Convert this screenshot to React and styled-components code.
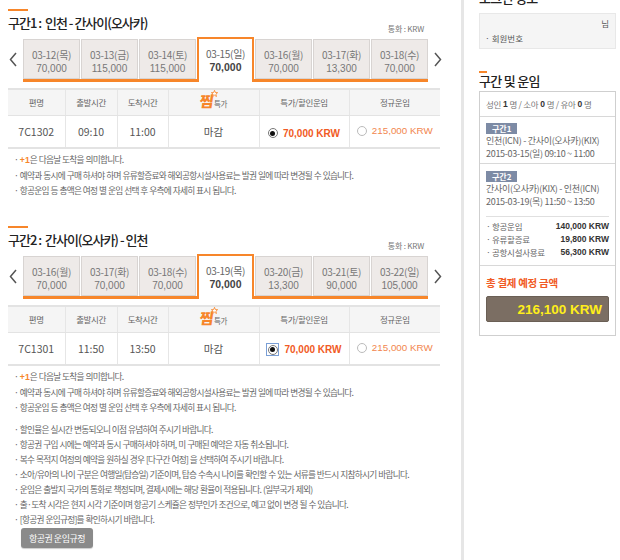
import React from "react";
import styled, { createGlobalStyle } from "styled-components";

const ORANGE = "#f7862a";
const RED = "#f15a24";

const Global = createGlobalStyle`
  html, body { margin: 0; padding: 0; background: #fff; }
  body { font-family: "Noto Sans CJK KR", "Liberation Sans", sans-serif; color: #444; font-size: 10px; }
  * { box-sizing: border-box; }
`;

const Page = styled.div`
  display: flex;
  width: 620px;
  height: 560px;
  overflow: hidden;
`;

const Main = styled.div`
  width: 461px;
  padding: 9px 21px 0 8px;
`;

const Divider = styled.div`
  width: 3px;
  background: #e6e6e6;
  flex: none;
`;

const Side = styled.div`
  width: 156px;
  padding: 0 4px 0 15px;
`;

const Section = styled.section`
  margin-bottom: ${(p) => p.$mb || 0}px;
`;

const Bar = styled.div`
  width: ${(p) => p.$w || 20}px;
  height: 2px;
  background: ${ORANGE};
`;

const Title = styled.h2`
  margin: 3px 0 0;
  font-size: 13px;
  font-weight: 500;
  color: #222;
  line-height: 18px;
  letter-spacing: -1px;
  white-space: pre;
`;

const Currency = styled.div`
  text-align: right;
  font-size: 8px;
  color: #777;
  line-height: 10px;
  margin: -8px 16px 0 0;
  letter-spacing: -0.2px;
`;

const TabRow = styled.div`
  display: flex;
  align-items: center;
  margin-top: 3px;
`;

const Arrow = styled.div`
  width: 15px;
  flex: none;
  display: flex;
  justify-content: ${(p) => (p.$right ? "flex-end" : "flex-start")};
  padding-left: ${(p) => (p.$right ? "0" : "1px")};
  padding-right: ${(p) => (p.$right ? "1px" : "0")};
  margin-top: -1px;
`;

const Tabs = styled.div`
  display: flex;
  gap: 1px;
  width: 405px;
  height: 45px;
  align-items: flex-end;
  box-shadow: inset 0 -3px 0 ${ORANGE};
`;

const Tab = styled.div`
  width: 57px;
  flex: none;
  text-align: center;
  font-size: 10px;
  line-height: 13px;
  letter-spacing: -0.3px;
  ${(p) =>
    p.$sel
      ? `
    height: 45px;
    background: #fff;
    border: 2px solid ${ORANGE};
    border-bottom: none;
    padding-top: 8px;
    color: #666;
  `
      : `
    height: 40px;
    margin-bottom: 3px;
    background: #eeeae8;
    border: 1px solid #d8d4d2;
    padding-top: 8px;
    color: #777;
  `}
`;

const TabPrice = styled.div`
  font-family: "Liberation Sans", sans-serif;
  font-size: ${(p) => (p.$sel ? "10.5px" : "10px")};
  font-weight: ${(p) => (p.$sel ? 700 : 400)};
  color: ${(p) => (p.$sel ? "#444" : "#777")};
  margin-top: 1px;
  letter-spacing: 0;
`;

const Table = styled.table`
  width: 432px;
  margin-top: 6px;
  border-collapse: collapse;
  table-layout: fixed;
  border-top: 2px solid #e3e3e3;
  border-bottom: 2px solid #e3e3e3;
`;

const Th = styled.th`
  height: 26px;
  background: #f5f5f5;
  font-weight: 400;
  font-size: 8.5px;
  color: #666;
  border-left: 1px solid #e6e6e6;
  border-bottom: 1px solid #e3e3e3;
  letter-spacing: -0.4px;
  padding: 0;
  &:first-child { border-left: none; }
`;

const Td = styled.td`
  height: 33px;
  text-align: center;
  font-size: 10.5px;
  color: #555;
  border-left: 1px solid #e6e6e6;
  padding: 0;
  &:first-child { border-left: none; }
`;

const Jjim = styled.span`
  display: inline-flex;
  align-items: flex-end;
  position: relative;
  margin-top: -3px;
`;

const JjimChar = styled.span`
  font-size: 15px;
  font-weight: 900;
  color: ${ORANGE};
  line-height: 15px;
  letter-spacing: -1px;
  transform: skewX(-8deg);
`;

const JjimSmall = styled.span`
  font-size: 7.5px;
  color: #666;
  margin-left: 1px;
  line-height: 9px;
`;

const Star = styled.svg`
  position: absolute;
  left: 11px;
  top: -3px;
`;

const FareCell = styled.span`
  display: inline-flex;
  align-items: center;
  gap: 5px;
  font-family: "Liberation Sans", sans-serif;
  font-size: ${(p) => (p.$bold ? "10px" : "9.8px")};
  font-weight: ${(p) => (p.$bold ? 700 : 400)};
  color: ${(p) => (p.$bold ? RED : "#f2864e")};
`;

const RadioWrap = styled.span`
  display: inline-flex;
  width: ${(p) => (p.$focus ? "13px" : "auto")};
  height: ${(p) => (p.$focus ? "13px" : "auto")};
  align-items: center;
  justify-content: center;
  border: ${(p) => (p.$focus ? "1px solid #7a9fd6" : "none")};
`;

const Radio = styled.span`
  width: 10px;
  height: 10px;
  border-radius: 50%;
  border: 1px solid ${(p) => (p.$on ? "#777" : "#bbb")};
  background: #fff;
  display: inline-flex;
  align-items: center;
  justify-content: center;
  &::after {
    content: "";
    display: ${(p) => (p.$on ? "block" : "none")};
    width: 5px;
    height: 5px;
    border-radius: 50%;
    background: #111;
  }
`;

const Notes = styled.ul`
  list-style: none;
  margin: ${(p) => p.$mt || 3}px 0 0;
  padding: 0 0 0 6px;
`;

const Note = styled.li`
  font-size: 8.7px;
  line-height: 15px;
  color: #666;
  letter-spacing: -0.75px;
  word-spacing: 0.5px;
  white-space: nowrap;
  &::before { content: "· "; }
`;

const Plus = styled.b`
  color: ${ORANGE};
  font-family: "Liberation Sans", sans-serif;
  letter-spacing: 0;
`;

const RuleButton = styled.button`
  display: block;
  margin: 1px 0 0 13px;
  height: 20px;
  padding: 0 8px;
  border: none;
  border-radius: 3px;
  background: #8a8a8a;
  color: #fff;
  font-family: "Noto Sans CJK KR", sans-serif;
  font-size: 9px;
  letter-spacing: -0.5px;
  box-shadow: 0 1px 1px rgba(0,0,0,0.2);
`;

/* side */
const SideTitle = styled.h3`
  margin: ${(p) => p.$mt || 0}px 0 0;
  font-size: 13px;
  font-weight: 500;
  color: #222;
  line-height: 16px;
  letter-spacing: -0.7px;
`;

const LoginBox = styled.div`
  margin-top: 7px;
  width: 137px;
  height: 36px;
  background: #f5f5f5;
  border: 1px solid #e8e8e8;
  padding: 2px 6px 0 5px;
  font-size: 8.5px;
  color: #555;
  line-height: 15px;
`;

const RightText = styled.div`
  text-align: right;
`;

const Spacer = styled.div`
  height: ${(p) => p.$h}px;
`;

const FareBox = styled.div`
  margin-top: 2px;
  width: 137px;
  border: 1px solid #cfcfcf;
`;

const Pax = styled.div`
  height: 25px;
  padding: 0 6px;
  display: flex;
  align-items: center;
  font-size: 8.5px;
  color: #777;
  border-bottom: 1px solid #d8d8d8;
  letter-spacing: -0.3px;
  b { color: #333; font-family: "Liberation Sans", sans-serif; margin: 0 2px; }
`;

const Seg = styled.div`
  padding: ${(p) => (p.$last ? "7px 6px 8px" : "6px 6px 3px")};
  border-bottom: ${(p) => (p.$last ? "none" : "1px solid #d8d8d8")};
`;

const Badge = styled.div`
  width: fit-content;
  height: 11px;
  padding: 0 6px;
  background: #7d8ba5;
  color: #fff;
  font-size: 8px;
  line-height: 11px;
  font-weight: 700;
`;

const SegLine = styled.div`
  font-size: 9px;
  color: #666;
  line-height: 13px;
  letter-spacing: -0.3px;
  white-space: nowrap;
`;

const Fees = styled.div`
  margin: 0 6px;
  padding: 3px 0 6px;
  border-top: 1px solid #e0e0e0;
`;

const FeeRow = styled.div`
  display: flex;
  justify-content: space-between;
  font-size: 8.5px;
  line-height: 13px;
  color: #666;
  letter-spacing: -0.3px;
  b { font-family: "Liberation Sans", sans-serif; color: #333; letter-spacing: 0; }
`;

const TotalArea = styled.div`
  border-top: 1px solid #d8d8d8;
  padding: 10px 6px 13px;
`;

const TotalLabel = styled.div`
  font-size: 10.5px;
  font-weight: 700;
  color: ${RED};
  line-height: 14px;
  letter-spacing: -0.3px;
`;

const TotalAmount = styled.div`
  margin-top: 6px;
  height: 26px;
  background: #7b6e63;
  border: 1px solid #6a5f55;
  border-radius: 2px;
  display: flex;
  align-items: center;
  justify-content: flex-end;
  padding-right: 6px;
  font-family: "Liberation Sans", sans-serif;
  font-weight: 700;
  font-size: 13.5px;
  color: #ffee1a;
`;

const Chevron = ({ right }) => (
  <svg width="8" height="15" viewBox="0 0 8 15">
    <path
      d={right ? "M1 1 L6.5 7.5 L1 14" : "M7 1 L1.5 7.5 L7 14"}
      fill="none"
      stroke="#555"
      strokeWidth="1.5"
    />
  </svg>
);

const segs = [
  {
    title: "구간1 :  인천 - 간사이(오사카)",
    tabs: [
      ["03-12(목)", "70,000"],
      ["03-13(금)", "115,000"],
      ["03-14(토)", "115,000"],
      ["03-15(일)", "70,000"],
      ["03-16(월)", "70,000"],
      ["03-17(화)", "13,300"],
      ["03-18(수)", "70,000"],
    ],
    flight: ["7C1302", "09:10", "11:00"],
    focus: false,
  },
  {
    title: "구간2 :  간사이(오사카) - 인천",
    tabs: [
      ["03-16(월)", "70,000"],
      ["03-17(화)", "70,000"],
      ["03-18(수)", "70,000"],
      ["03-19(목)", "70,000"],
      ["03-20(금)", "13,300"],
      ["03-21(토)", "90,000"],
      ["03-22(일)", "105,000"],
    ],
    flight: ["7C1301", "11:50", "13:50"],
    focus: true,
  },
];

const Segment = ({ s, mb }) => (
  <Section $mb={mb}>
    <Bar />
    <Title>{s.title}</Title>
    <Currency>통화 : KRW</Currency>
    <TabRow>
      <Arrow>
        <Chevron />
      </Arrow>
      <Tabs>
        {s.tabs.map(([d, p], i) => (
          <Tab key={i} $sel={i === 3}>
            <div>{d}</div>
            <TabPrice $sel={i === 3}>{p}</TabPrice>
          </Tab>
        ))}
      </Tabs>
      <Arrow $right>
        <Chevron right />
      </Arrow>
    </TabRow>
    <Table>
      <colgroup>
        <col style={{ width: 57 }} />
        <col style={{ width: 52 }} />
        <col style={{ width: 51 }} />
        <col style={{ width: 91 }} />
        <col style={{ width: 90 }} />
        <col style={{ width: 91 }} />
      </colgroup>
      <thead>
        <tr>
          <Th>편명</Th>
          <Th>출발시간</Th>
          <Th>도착시간</Th>
          <Th>
            <Jjim>
              <JjimChar>찜</JjimChar>
              <Star width="7" height="7" viewBox="0 0 10 10">
                <path
                  d="M5 0.5 L6.2 3.6 L9.5 3.8 L7 5.9 L7.8 9.3 L5 7.4 L2.2 9.3 L3 5.9 L0.5 3.8 L3.8 3.6 Z"
                  fill="#fff"
                  stroke={ORANGE}
                  strokeWidth="1.2"
                />
              </Star>
              <JjimSmall>특가</JjimSmall>
            </Jjim>
          </Th>
          <Th>특가/할인운임</Th>
          <Th>정규운임</Th>
        </tr>
      </thead>
      <tbody>
        <tr>
          <Td>{s.flight[0]}</Td>
          <Td>{s.flight[1]}</Td>
          <Td>{s.flight[2]}</Td>
          <Td>마감</Td>
          <Td>
            <FareCell $bold>
              <RadioWrap $focus={s.focus}>
                <Radio $on />
              </RadioWrap>
              70,000 KRW
            </FareCell>
          </Td>
          <Td>
            <FareCell>
              <Radio />
              215,000 KRW
            </FareCell>
          </Td>
        </tr>
      </tbody>
    </Table>
    <Notes>
      <Note>
        <Plus>+1</Plus>은 다음날 도착을 의미합니다.
      </Note>
      <Note>예약과 동시에 구매 하셔야 하며 유류할증료와 해외공항시설사용료는 발권 일에 따라 변경될 수 있습니다.</Note>
      <Note>항공운임 등 총액은 여정 별 운임 선택 후 우측에 자세히 표시 됩니다.</Note>
    </Notes>
  </Section>
);

const general = [
  "할인율은 실시간 변동되오니 이점 유념하여 주시기 바랍니다.",
  "항공권 구입 시에는 예약과 동시 구매하셔야 하며, 미 구매된 예약은 자동 취소됩니다.",
  "복수 목적지 여정의 예약을 원하실 경우 [다구간 여정] 을 선택하여 주시기 바랍니다.",
  "소아/유아의 나이 구분은 여행일(탑승일) 기준이며, 탑승 수속시 나이를 확인할 수 있는 서류를 반드시 지참하시기 바랍니다.",
  "운임은 출발지 국가의 통화로 책정되며, 결제시에는 해당 환율이 적용됩니다. (일부국가 제외)",
  "출·도착 시각은 현지 시각 기준이며 항공기 스케쥴은 정부인가 조건으로, 예고 없이 변경 될 수 있습니다.",
  "[항공권 운임규정]를 확인하시기 바랍니다.",
];

export default function App() {
  return (
    <>
      <Global />
      <Page>
        <Main>
          <Segment s={segs[0]} mb={28} />
          <Segment s={segs[1]} />
          <Notes $mt={7}>
            {general.map((t, i) => (
              <Note key={i}>{t}</Note>
            ))}
          </Notes>
          <RuleButton>항공권 운임규정</RuleButton>
        </Main>
        <Divider />
        <Side>
          <SideTitle $mt={-10}>로그인 정보</SideTitle>
          <LoginBox>
            <RightText>님</RightText>
            <div>· 회원번호</div>
          </LoginBox>
          <Spacer $h={22} />
          <Bar $w={8} />
          <SideTitle $mt={0}>구간 및 운임</SideTitle>
          <FareBox>
            <Pax>
              성인<b>1</b>명 / 소아<b>0</b>명 / 유아<b>0</b>명
            </Pax>
            <Seg>
              <Badge>구간1</Badge>
              <SegLine>인천(ICN) - 간사이(오사카)(KIX)</SegLine>
              <SegLine>2015-03-15(일) 09:10 ~ 11:00</SegLine>
            </Seg>
            <Seg $last>
              <Badge>구간2</Badge>
              <SegLine>간사이(오사카)(KIX) - 인천(ICN)</SegLine>
              <SegLine>2015-03-19(목) 11:50 ~ 13:50</SegLine>
            </Seg>
            <Fees>
              <FeeRow>
                <span>· 항공운임</span>
                <b>140,000 KRW</b>
              </FeeRow>
              <FeeRow>
                <span>· 유류할증료</span>
                <b>19,800 KRW</b>
              </FeeRow>
              <FeeRow>
                <span>· 공항시설사용료</span>
                <b>56,300 KRW</b>
              </FeeRow>
            </Fees>
            <TotalArea>
              <TotalLabel>총 결제 예정 금액</TotalLabel>
              <TotalAmount>216,100 KRW</TotalAmount>
            </TotalArea>
          </FareBox>
        </Side>
      </Page>
    </>
  );
}
